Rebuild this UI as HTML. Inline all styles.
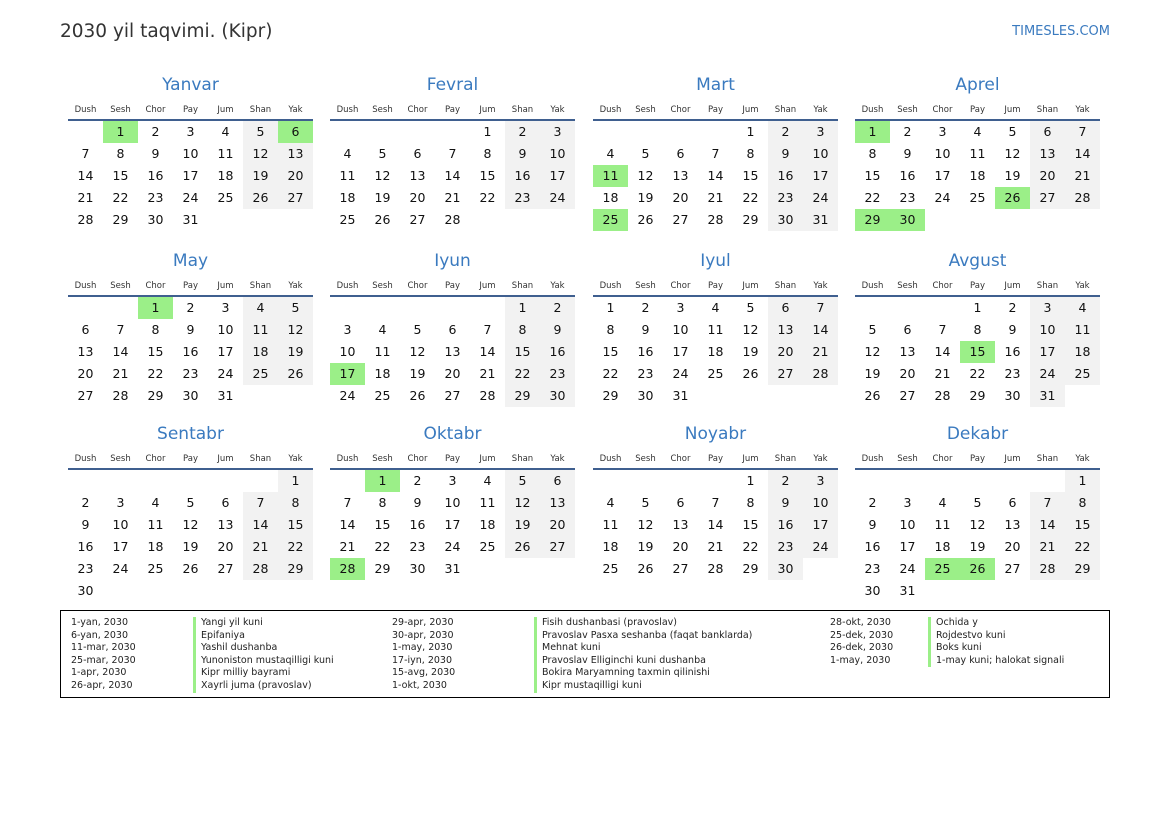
<!DOCTYPE html>
<html><head><meta charset="utf-8"><style>
body{margin:0;width:1169px;height:827px;background:#fff;font-family:"DejaVu Sans","Liberation Sans",sans-serif;color:#111;position:relative;overflow:hidden}
.t{position:absolute;left:60px;top:21px;font-size:18.5px;color:#333}
.s{position:absolute;right:59px;top:24px;font-size:13px;color:#3a7abf}
.m{position:absolute;width:245px}
.m h2{margin:0;height:26px;line-height:26px;text-align:center;font-weight:normal;font-size:17px;color:#3a7abf}
.hd{display:grid;grid-template-columns:repeat(7,35px);font-size:8.5px;color:#333;text-align:center;height:21px;line-height:24px;border-bottom:2px solid #3f5f8f}
.g{display:grid;grid-template-columns:repeat(7,35px);grid-auto-rows:22px;font-size:12.5px;text-align:center;line-height:22px}
.g b{font-weight:normal}
.g .w{background:#f2f2f2}
.g .h{background:#9bef88}
.lg{position:absolute;left:60px;top:610px;width:1048px;height:86px;border:1px solid #000;font-size:9.5px;line-height:12.6px;color:#222}
.c{position:absolute;top:6px;white-space:pre}
.n{position:absolute;top:6px;border-left:3px solid #9bef88}
.n div{padding-left:5px}
</style></head><body>
<div class="t">2030 yil taqvimi. (Kipr)</div>
<div class="s">TIMESLES.COM</div>

<div class="m" style="left:68px;top:72px"><h2>Yanvar</h2><div class="hd"><span>Dush</span><span>Sesh</span><span>Chor</span><span>Pay</span><span>Jum</span><span>Shan</span><span>Yak</span></div><div class="g">
<i></i><b class="h">1</b><b>2</b><b>3</b><b>4</b><b class="w">5</b><b class="h">6</b>
<b>7</b><b>8</b><b>9</b><b>10</b><b>11</b><b class="w">12</b><b class="w">13</b>
<b>14</b><b>15</b><b>16</b><b>17</b><b>18</b><b class="w">19</b><b class="w">20</b>
<b>21</b><b>22</b><b>23</b><b>24</b><b>25</b><b class="w">26</b><b class="w">27</b>
<b>28</b><b>29</b><b>30</b><b>31</b></div></div>

<div class="m" style="left:330px;top:72px"><h2>Fevral</h2><div class="hd"><span>Dush</span><span>Sesh</span><span>Chor</span><span>Pay</span><span>Jum</span><span>Shan</span><span>Yak</span></div><div class="g">
<i></i><i></i><i></i><i></i><b>1</b><b class="w">2</b><b class="w">3</b>
<b>4</b><b>5</b><b>6</b><b>7</b><b>8</b><b class="w">9</b><b class="w">10</b>
<b>11</b><b>12</b><b>13</b><b>14</b><b>15</b><b class="w">16</b><b class="w">17</b>
<b>18</b><b>19</b><b>20</b><b>21</b><b>22</b><b class="w">23</b><b class="w">24</b>
<b>25</b><b>26</b><b>27</b><b>28</b></div></div>

<div class="m" style="left:593px;top:72px"><h2>Mart</h2><div class="hd"><span>Dush</span><span>Sesh</span><span>Chor</span><span>Pay</span><span>Jum</span><span>Shan</span><span>Yak</span></div><div class="g">
<i></i><i></i><i></i><i></i><b>1</b><b class="w">2</b><b class="w">3</b>
<b>4</b><b>5</b><b>6</b><b>7</b><b>8</b><b class="w">9</b><b class="w">10</b>
<b class="h">11</b><b>12</b><b>13</b><b>14</b><b>15</b><b class="w">16</b><b class="w">17</b>
<b>18</b><b>19</b><b>20</b><b>21</b><b>22</b><b class="w">23</b><b class="w">24</b>
<b class="h">25</b><b>26</b><b>27</b><b>28</b><b>29</b><b class="w">30</b><b class="w">31</b></div></div>

<div class="m" style="left:855px;top:72px"><h2>Aprel</h2><div class="hd"><span>Dush</span><span>Sesh</span><span>Chor</span><span>Pay</span><span>Jum</span><span>Shan</span><span>Yak</span></div><div class="g">
<b class="h">1</b><b>2</b><b>3</b><b>4</b><b>5</b><b class="w">6</b><b class="w">7</b>
<b>8</b><b>9</b><b>10</b><b>11</b><b>12</b><b class="w">13</b><b class="w">14</b>
<b>15</b><b>16</b><b>17</b><b>18</b><b>19</b><b class="w">20</b><b class="w">21</b>
<b>22</b><b>23</b><b>24</b><b>25</b><b class="h">26</b><b class="w">27</b><b class="w">28</b>
<b class="h">29</b><b class="h">30</b></div></div>

<div class="m" style="left:68px;top:248px"><h2>May</h2><div class="hd"><span>Dush</span><span>Sesh</span><span>Chor</span><span>Pay</span><span>Jum</span><span>Shan</span><span>Yak</span></div><div class="g">
<i></i><i></i><b class="h">1</b><b>2</b><b>3</b><b class="w">4</b><b class="w">5</b>
<b>6</b><b>7</b><b>8</b><b>9</b><b>10</b><b class="w">11</b><b class="w">12</b>
<b>13</b><b>14</b><b>15</b><b>16</b><b>17</b><b class="w">18</b><b class="w">19</b>
<b>20</b><b>21</b><b>22</b><b>23</b><b>24</b><b class="w">25</b><b class="w">26</b>
<b>27</b><b>28</b><b>29</b><b>30</b><b>31</b></div></div>

<div class="m" style="left:330px;top:248px"><h2>Iyun</h2><div class="hd"><span>Dush</span><span>Sesh</span><span>Chor</span><span>Pay</span><span>Jum</span><span>Shan</span><span>Yak</span></div><div class="g">
<i></i><i></i><i></i><i></i><i></i><b class="w">1</b><b class="w">2</b>
<b>3</b><b>4</b><b>5</b><b>6</b><b>7</b><b class="w">8</b><b class="w">9</b>
<b>10</b><b>11</b><b>12</b><b>13</b><b>14</b><b class="w">15</b><b class="w">16</b>
<b class="h">17</b><b>18</b><b>19</b><b>20</b><b>21</b><b class="w">22</b><b class="w">23</b>
<b>24</b><b>25</b><b>26</b><b>27</b><b>28</b><b class="w">29</b><b class="w">30</b></div></div>

<div class="m" style="left:593px;top:248px"><h2>Iyul</h2><div class="hd"><span>Dush</span><span>Sesh</span><span>Chor</span><span>Pay</span><span>Jum</span><span>Shan</span><span>Yak</span></div><div class="g">
<b>1</b><b>2</b><b>3</b><b>4</b><b>5</b><b class="w">6</b><b class="w">7</b>
<b>8</b><b>9</b><b>10</b><b>11</b><b>12</b><b class="w">13</b><b class="w">14</b>
<b>15</b><b>16</b><b>17</b><b>18</b><b>19</b><b class="w">20</b><b class="w">21</b>
<b>22</b><b>23</b><b>24</b><b>25</b><b>26</b><b class="w">27</b><b class="w">28</b>
<b>29</b><b>30</b><b>31</b></div></div>

<div class="m" style="left:855px;top:248px"><h2>Avgust</h2><div class="hd"><span>Dush</span><span>Sesh</span><span>Chor</span><span>Pay</span><span>Jum</span><span>Shan</span><span>Yak</span></div><div class="g">
<i></i><i></i><i></i><b>1</b><b>2</b><b class="w">3</b><b class="w">4</b>
<b>5</b><b>6</b><b>7</b><b>8</b><b>9</b><b class="w">10</b><b class="w">11</b>
<b>12</b><b>13</b><b>14</b><b class="h">15</b><b>16</b><b class="w">17</b><b class="w">18</b>
<b>19</b><b>20</b><b>21</b><b>22</b><b>23</b><b class="w">24</b><b class="w">25</b>
<b>26</b><b>27</b><b>28</b><b>29</b><b>30</b><b class="w">31</b></div></div>

<div class="m" style="left:68px;top:421px"><h2>Sentabr</h2><div class="hd"><span>Dush</span><span>Sesh</span><span>Chor</span><span>Pay</span><span>Jum</span><span>Shan</span><span>Yak</span></div><div class="g">
<i></i><i></i><i></i><i></i><i></i><i></i><b class="w">1</b>
<b>2</b><b>3</b><b>4</b><b>5</b><b>6</b><b class="w">7</b><b class="w">8</b>
<b>9</b><b>10</b><b>11</b><b>12</b><b>13</b><b class="w">14</b><b class="w">15</b>
<b>16</b><b>17</b><b>18</b><b>19</b><b>20</b><b class="w">21</b><b class="w">22</b>
<b>23</b><b>24</b><b>25</b><b>26</b><b>27</b><b class="w">28</b><b class="w">29</b>
<b>30</b></div></div>

<div class="m" style="left:330px;top:421px"><h2>Oktabr</h2><div class="hd"><span>Dush</span><span>Sesh</span><span>Chor</span><span>Pay</span><span>Jum</span><span>Shan</span><span>Yak</span></div><div class="g">
<i></i><b class="h">1</b><b>2</b><b>3</b><b>4</b><b class="w">5</b><b class="w">6</b>
<b>7</b><b>8</b><b>9</b><b>10</b><b>11</b><b class="w">12</b><b class="w">13</b>
<b>14</b><b>15</b><b>16</b><b>17</b><b>18</b><b class="w">19</b><b class="w">20</b>
<b>21</b><b>22</b><b>23</b><b>24</b><b>25</b><b class="w">26</b><b class="w">27</b>
<b class="h">28</b><b>29</b><b>30</b><b>31</b></div></div>

<div class="m" style="left:593px;top:421px"><h2>Noyabr</h2><div class="hd"><span>Dush</span><span>Sesh</span><span>Chor</span><span>Pay</span><span>Jum</span><span>Shan</span><span>Yak</span></div><div class="g">
<i></i><i></i><i></i><i></i><b>1</b><b class="w">2</b><b class="w">3</b>
<b>4</b><b>5</b><b>6</b><b>7</b><b>8</b><b class="w">9</b><b class="w">10</b>
<b>11</b><b>12</b><b>13</b><b>14</b><b>15</b><b class="w">16</b><b class="w">17</b>
<b>18</b><b>19</b><b>20</b><b>21</b><b>22</b><b class="w">23</b><b class="w">24</b>
<b>25</b><b>26</b><b>27</b><b>28</b><b>29</b><b class="w">30</b></div></div>

<div class="m" style="left:855px;top:421px"><h2>Dekabr</h2><div class="hd"><span>Dush</span><span>Sesh</span><span>Chor</span><span>Pay</span><span>Jum</span><span>Shan</span><span>Yak</span></div><div class="g">
<i></i><i></i><i></i><i></i><i></i><i></i><b class="w">1</b>
<b>2</b><b>3</b><b>4</b><b>5</b><b>6</b><b class="w">7</b><b class="w">8</b>
<b>9</b><b>10</b><b>11</b><b>12</b><b>13</b><b class="w">14</b><b class="w">15</b>
<b>16</b><b>17</b><b>18</b><b>19</b><b>20</b><b class="w">21</b><b class="w">22</b>
<b>23</b><b>24</b><b class="h">25</b><b class="h">26</b><b>27</b><b class="w">28</b><b class="w">29</b>
<b>30</b><b>31</b></div></div>

<div class="lg">
<div class="c" style="left:10px">1-yan, 2030
6-yan, 2030
11-mar, 2030
25-mar, 2030
1-apr, 2030
26-apr, 2030</div>
<div class="n" style="left:132px"><div>Yangi yil kuni</div><div>Epifaniya</div><div>Yashil dushanba</div><div>Yunoniston mustaqilligi kuni</div><div>Kipr milliy bayrami</div><div>Xayrli juma (pravoslav)</div></div>
<div class="c" style="left:331px">29-apr, 2030
30-apr, 2030
1-may, 2030
17-iyn, 2030
15-avg, 2030
1-okt, 2030</div>
<div class="n" style="left:473px"><div>Fisih dushanbasi (pravoslav)</div><div>Pravoslav Pasxa seshanba (faqat banklarda)</div><div>Mehnat kuni</div><div>Pravoslav Elliginchi kuni dushanba</div><div>Bokira Maryamning taxmin qilinishi</div><div>Kipr mustaqilligi kuni</div></div>
<div class="c" style="left:769px">28-okt, 2030
25-dek, 2030
26-dek, 2030
1-may, 2030</div>
<div class="n" style="left:867px"><div>Ochida y</div><div>Rojdestvo kuni</div><div>Boks kuni</div><div>1-may kuni; halokat signali</div></div>
</div>
</body></html>
